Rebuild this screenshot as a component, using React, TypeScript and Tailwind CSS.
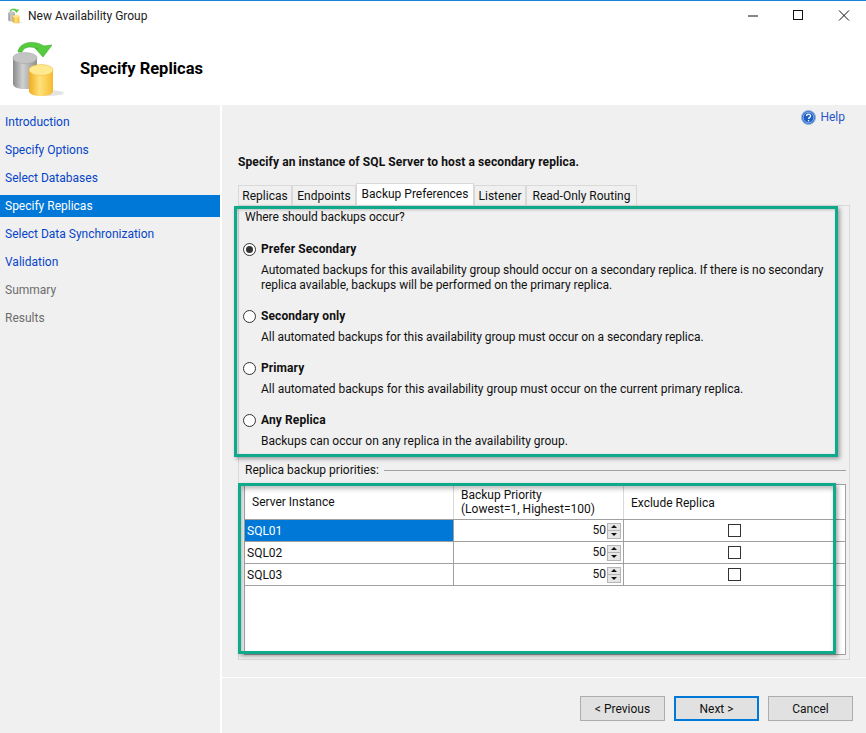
const navItems = [
  { label: "Introduction", state: "link" },
  { label: "Specify Options", state: "link" },
  { label: "Select Databases", state: "link" },
  { label: "Specify Replicas", state: "active" },
  { label: "Select Data Synchronization", state: "link" },
  { label: "Validation", state: "link" },
  { label: "Summary", state: "off" },
  { label: "Results", state: "off" },
];

const tabs = [
  { label: "Replicas", width: "w-[54px]" },
  { label: "Endpoints", width: "w-[64px]" },
  { label: "Backup Preferences", width: "w-[118px]", active: true },
  { label: "Listener", width: "w-[52px]" },
  { label: "Read-Only Routing", width: "w-[111px]" },
];

const options = [
  {
    title: "Prefer Secondary",
    checked: true,
    gap: "mt-[16px]",
    descGap: "mt-[6px] tracking-[-0.04px]",
    lines: [
      "Automated backups for this availability group should occur on a secondary replica. If there is no secondary",
      "replica available, backups will be performed on the primary replica.",
    ],
  },
  {
    title: "Secondary only",
    gap: "mt-[15px]",
    descGap: "mt-[6px] tracking-[-0.04px]",
    lines: ["All automated backups for this availability group must occur on a secondary replica."],
  },
  {
    title: "Primary",
    gap: "mt-[15px]",
    descGap: "mt-[6px]",
    lines: ["All automated backups for this availability group must occur on the current primary replica."],
  },
  {
    title: "Any Replica",
    gap: "mt-[15px]",
    descGap: "mt-[6px]",
    lines: ["Backups can occur on any replica in the availability group."],
  },
];

const replicas = ["SQL01", "SQL02", "SQL03"];

const DbLogo = ({ size }: { size: number }) => (
  <svg width={size} height={size} viewBox="0 0 58 58">
    <defs>
      <linearGradient id="grayDb" x1="0" x2="1" y1="0" y2="0">
        <stop offset="0" stopColor="#8a8a8a" />
        <stop offset="0.4" stopColor="#d0d0d0" />
        <stop offset="1" stopColor="#8f8f8f" />
      </linearGradient>
      <linearGradient id="yellowDb" x1="0" x2="1" y1="0" y2="0">
        <stop offset="0" stopColor="#f2ab1c" />
        <stop offset="0.45" stopColor="#ffe27a" />
        <stop offset="1" stopColor="#f6ba30" />
      </linearGradient>
    </defs>
    <ellipse cx="40" cy="53" rx="16" ry="3" fill="#e4e4e4" />
    <path d="M5 18v26c0 3 5 5 12 5s12-2 12-5V18z" fill="url(#grayDb)" />
    <ellipse cx="17" cy="18" rx="12" ry="5.5" fill="#c4c4c4" stroke="#a0a0a0" strokeWidth="0.5" />
    <path d="M21 30v21c0 3 5 5 12 5s12-2 12-5V30z" fill="url(#yellowDb)" />
    <ellipse cx="33" cy="30" rx="12" ry="5.5" fill="#ffe98f" stroke="#eeb22a" strokeWidth="0.5" />
    <path
      d="M10 12C11 3 24-1 36 6l8-1-9 12-8-9 3 1C24 6 16 6 14 12z"
      fill="#55cc3e"
      stroke="#3aa82c"
      strokeWidth="0.6"
    />
  </svg>
);

const HelpIcon = () => (
  <svg width="15" height="15" viewBox="0 0 15 15">
    <circle cx="7.5" cy="7.5" r="7" fill="#2f6fd0" stroke="#9db8dc" />
    <circle cx="7.5" cy="7.5" r="5.3" fill="#1f5fc4" stroke="#cfe0f5" strokeWidth="0.6" />
    <path d="M5.6 6c0-2.4 4-2.4 4 0 0 1.4-2 1.4-2 3" fill="none" stroke="#fff" strokeWidth="1.3" />
    <rect x="6.9" y="10" width="1.3" height="1.4" fill="#fff" />
  </svg>
);

const Radio = ({ checked }: { checked?: boolean }) => (
  <span className="flex h-[13px] w-[13px] shrink-0 items-center justify-center rounded-full border border-[#333] bg-white">
    {checked && <span className="h-[7px] w-[7px] rounded-full bg-[#333]" />}
  </span>
);

const Spinner = () => (
  <span className="flex h-[16px] w-[14px] shrink-0 flex-col border border-[#b5b5b5] bg-[#e6e6e6]">
    <span className="flex flex-1 items-center justify-center border-b border-[#b5b5b5]">
      <svg width="6" height="3" viewBox="0 0 6 3">
        <path d="M3 0l3 3H0z" fill="#111" />
      </svg>
    </span>
    <span className="flex flex-1 items-center justify-center">
      <svg width="6" height="3" viewBox="0 0 6 3">
        <path d="M0 0h6L3 3z" fill="#111" />
      </svg>
    </span>
  </span>
);

const Button = ({ label, primary }: { label: string; primary?: boolean }) => (
  <button
    className={
      "h-[25px] w-[85px] bg-[#e1e1e1] text-[12px] text-[#111] " +
      (primary ? "border-2 border-[#0078d7]" : "border border-[#adadad]")
    }
  >
    {label}
  </button>
);

export default function App() {
  return (
    <div className="relative flex h-[733px] w-[866px] flex-col overflow-hidden bg-white font-['Roboto','Liberation_Sans',sans-serif] text-[12px] leading-[16px] text-[#111]">
      {/* title bar */}
      <div className="h-[1px] bg-[#1883d7]" />
      <div className="flex h-[30px] items-center pl-[7px]">
        <DbLogo size={16} />
        <span className="ml-[5px] text-[#222]">New Availability Group</span>
        <div className="ml-auto flex items-center">
          <svg width="166" height="14" viewBox="0 0 166 14">
            <path d="M48 7h10" stroke="#111" strokeWidth="1" />
            <rect x="93.5" y="1.5" width="9" height="9" fill="none" stroke="#111" strokeWidth="1" />
            <path d="M139 1.5l10 10M149 1.5l-10 10" stroke="#111" strokeWidth="1" />
          </svg>
        </div>
      </div>

      {/* header */}
      <div className="flex h-[74px] items-start pl-[8px]">
        <div className="mt-[9px]">
          <DbLogo size={58} />
        </div>
        <h1 className="ml-[14px] mt-[27px] text-[16.5px] font-bold leading-[22px] text-black">Specify Replicas</h1>
      </div>

      <div className="flex min-h-0 flex-1 bg-[#f0f0f0]">
        {/* left nav */}
        <nav className="w-[220px] shrink-0 pt-[3px]">
          {navItems.map((item) => (
            <div key={item.label} className="flex h-[28px] items-center">
              <div
                className={
                  "flex h-[22px] w-full items-center pl-[5px] " +
                  (item.state === "active"
                    ? "bg-[#0078d7] text-white"
                    : item.state === "link"
                      ? "text-[#0645c8]"
                      : "text-[#6d6d6d]")
                }
              >
                {item.label}
              </div>
            </div>
          ))}
        </nav>

        {/* right side */}
        <div className="flex min-w-0 flex-1 flex-col border-l-2 border-white">
          <div className="flex h-[572px] flex-col pl-[16px] pr-[16px]">
            <div className="flex items-center justify-end gap-[4px] pt-[4px] text-[#2a55c8]">
              <HelpIcon />
              <span className="mr-[5px]">Help</span>
            </div>
            <p className="mt-[29px] font-bold tracking-[0.1px] text-[#111]">
              Specify an instance of SQL Server to host a secondary replica.
            </p>

            <div className="mt-[13px] flex h-[22px] items-end">
              {tabs.map((tab) => (
                <div
                  key={tab.label}
                  className={
                    "flex items-center justify-center whitespace-nowrap border border-b-0 border-[#d9d9d9] " +
                    tab.width +
                    (tab.active ? " h-[22px] bg-white pb-[2px]" : " h-[20px] bg-[#f0f0f0] pt-[1px]")
                  }
                >
                  {tab.label}
                </div>
              ))}
            </div>

            <div className="relative flex h-[455px] flex-col border border-[#d9d9d9] pl-[5px] pr-[3px]">
              <div className="relative">
                <p className="ml-[1px] mt-[3px]">Where should backups occur?</p>
                {options.map((opt) => (
                  <div key={opt.title} className={opt.gap}>
                    <div className="-ml-[1px] flex h-[16px] items-center gap-[5px]">
                      <Radio checked={opt.checked} />
                      <span className="font-bold tracking-[0.1px]">{opt.title}</span>
                    </div>
                    <div className={"ml-[17px] leading-[15px] " + opt.descGap}>
                      {opt.lines.map((line) => (
                        <div key={line} className="whitespace-nowrap">
                          {line}
                        </div>
                      ))}
                    </div>
                  </div>
                ))}
              </div>

              <div className="ml-[1px] mt-[13px] flex h-[16px] items-center gap-[5px]">
                <span className="whitespace-nowrap">Replica backup priorities:</span>
                <div className="h-[1px] flex-1 bg-[#a0a0a0]" />
              </div>

              {/* grid */}
              <div className="mt-[6px] h-[171px] border border-[#a0a0a0] bg-white">
                <div className="grid h-[35px] grid-cols-[209px_170px_1fr] border-b border-[#a0a0a0]">
                  <div className="flex items-center border-r border-[#d9d9d9] pl-[7px]">Server Instance</div>
                  <div className="flex flex-col justify-end border-r border-[#d9d9d9] pb-[3px] pl-[7px] leading-[14px]">
                    <span>Backup Priority</span>
                    <span className="whitespace-nowrap">(Lowest=1, Highest=100)</span>
                  </div>
                  <div className="pl-[7px] pt-[10px]">Exclude Replica</div>
                </div>
                {replicas.map((name, i) => (
                  <div key={name} className="grid h-[22px] grid-cols-[209px_170px_1fr] border-b border-[#a0a0a0]">
                    <div
                      className={
                        "flex items-center border-r border-[#a0a0a0] pl-[2px] " +
                        (i === 0 ? "bg-[#0078d7] text-white" : "")
                      }
                    >
                      {name}
                    </div>
                    <div className="flex items-center justify-end gap-[1px] border-r border-[#a0a0a0] pr-[2px]">
                      <span className="pb-[2px]">50</span>
                      <Spinner />
                    </div>
                    <div className="flex items-center justify-center">
                      <span className="h-[13px] w-[13px] border border-[#333] bg-white" />
                    </div>
                  </div>
                ))}
              </div>
            </div>
          </div>

          <div className="border-t border-white">
            <div className="flex justify-end gap-[9px] pr-[13px] pt-[18px]">
              <Button label="< Previous" />
              <Button label="Next >" primary />
              <Button label="Cancel" />
            </div>
          </div>
        </div>
      </div>

      {/* teal annotation boxes */}
      <div className="absolute left-[234px] top-[206px] h-[251px] w-[604px] border-[3px] border-[#0fa98c] shadow-[2px_2px_4px_rgba(0,0,0,0.35),inset_1px_1px_3px_rgba(0,0,0,0.2)]" />
      <div className="absolute left-[238px] top-[483px] h-[171px] w-[598px] border-[3px] border-[#0fa98c] shadow-[2px_2px_4px_rgba(0,0,0,0.35),inset_1px_3px_4px_rgba(0,0,0,0.25)]" />
    </div>
  );
}
